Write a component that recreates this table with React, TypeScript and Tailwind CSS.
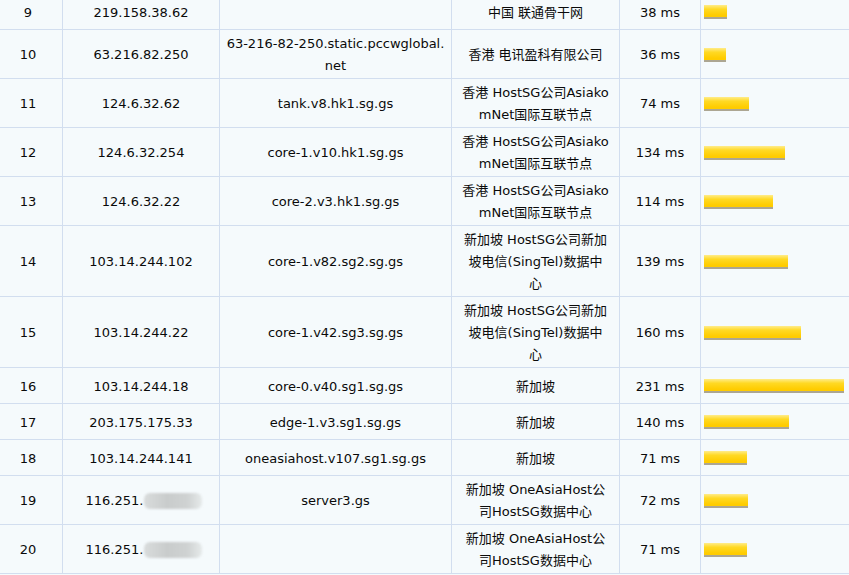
type Hop = {
  n: number;
  ip: string;
  masked?: boolean;
  host: string[];
  loc: string[];
  ms: number;
};

const TRIPLE = ['新加坡 HostSG公司新加', '坡电信(SingTel)数据中', '心'];
const HK = ['香港 HostSG公司Asiako', 'mNet国际互联节点'];
const ONEASIA = ['新加坡 OneAsiaHost公', '司HostSG数据中心'];

const hops: Hop[] = [
  { n: 9, ip: '219.158.38.62', host: [], loc: ['中国 联通骨干网'], ms: 38 },
  { n: 10, ip: '63.216.82.250', host: ['63-216-82-250.static.pccwglobal.', 'net'], loc: ['香港 电讯盈科有限公司'], ms: 36 },
  { n: 11, ip: '124.6.32.62', host: ['tank.v8.hk1.sg.gs'], loc: HK, ms: 74 },
  { n: 12, ip: '124.6.32.254', host: ['core-1.v10.hk1.sg.gs'], loc: HK, ms: 134 },
  { n: 13, ip: '124.6.32.22', host: ['core-2.v3.hk1.sg.gs'], loc: HK, ms: 114 },
  { n: 14, ip: '103.14.244.102', host: ['core-1.v82.sg2.sg.gs'], loc: TRIPLE, ms: 139 },
  { n: 15, ip: '103.14.244.22', host: ['core-1.v42.sg3.sg.gs'], loc: TRIPLE, ms: 160 },
  { n: 16, ip: '103.14.244.18', host: ['core-0.v40.sg1.sg.gs'], loc: ['新加坡'], ms: 231 },
  { n: 17, ip: '203.175.175.33', host: ['edge-1.v3.sg1.sg.gs'], loc: ['新加坡'], ms: 140 },
  { n: 18, ip: '103.14.244.141', host: ['oneasiahost.v107.sg1.sg.gs'], loc: ['新加坡'], ms: 71 },
  { n: 19, ip: '116.251.', masked: true, host: ['server3.gs'], loc: ONEASIA, ms: 72 },
  { n: 20, ip: '116.251.', masked: true, host: [], loc: ONEASIA, ms: 71 },
];

const cell = 'flex items-center justify-center text-center border-r border-[#d2deef] px-[2px] pt-[3px] pb-[1px] min-h-[35px]';

function Lines({ lines }: { lines: string[] }) {
  return (
    <div>
      {lines.map((l, i) => (
        <div key={i} className="whitespace-nowrap">{l}</div>
      ))}
    </div>
  );
}

export default function App() {
  return (
    <div className="w-[849px] h-[575px] overflow-hidden bg-[#f5fafc]">
      <div
        className="-ml-[6px] -mt-[6px] w-[855px] text-[13px] leading-[22px] text-[#0a0a0a]"
        style={{ fontFamily: '"DejaVu Sans", "Noto Sans CJK SC", sans-serif' }}
      >
        {hops.map((h) => (
          <div
            key={h.n}
            className="grid grid-cols-[69px_157px_232px_168px_81px_1fr] border-b border-[#d2deef]"
          >
            <div className={cell}>{h.n}</div>
            <div className={cell}>
              {h.masked ? (
                <span className="flex items-center pl-[6px]">
                  {h.ip}
                  <span className="ml-[1px] inline-block w-[58px] h-[16px] rounded-[6px] bg-[linear-gradient(to_right,#d9dcdc,#c9cccc_40%,#cfd2d2_75%,#e6eaea)] blur-[1.2px]" />
                </span>
              ) : (
                h.ip
              )}
            </div>
            <div className={cell}>
              <Lines lines={h.host} />
            </div>
            <div className={cell}>
              <Lines lines={h.loc} />
            </div>
            <div className={cell}>{h.ms} ms</div>
            <div className="flex items-center pl-[3px] pt-[1px] min-h-[35px]">
              <div
                className="h-[14px] border-b-2 border-[#aca692] bg-[linear-gradient(to_bottom,#ffec8a,#ffd924_35%,#ffcc00_85%)]"
                style={{ width: Math.round((h.ms * 140) / 231) }}
              />
            </div>
          </div>
        ))}
      </div>
    </div>
  );
}
